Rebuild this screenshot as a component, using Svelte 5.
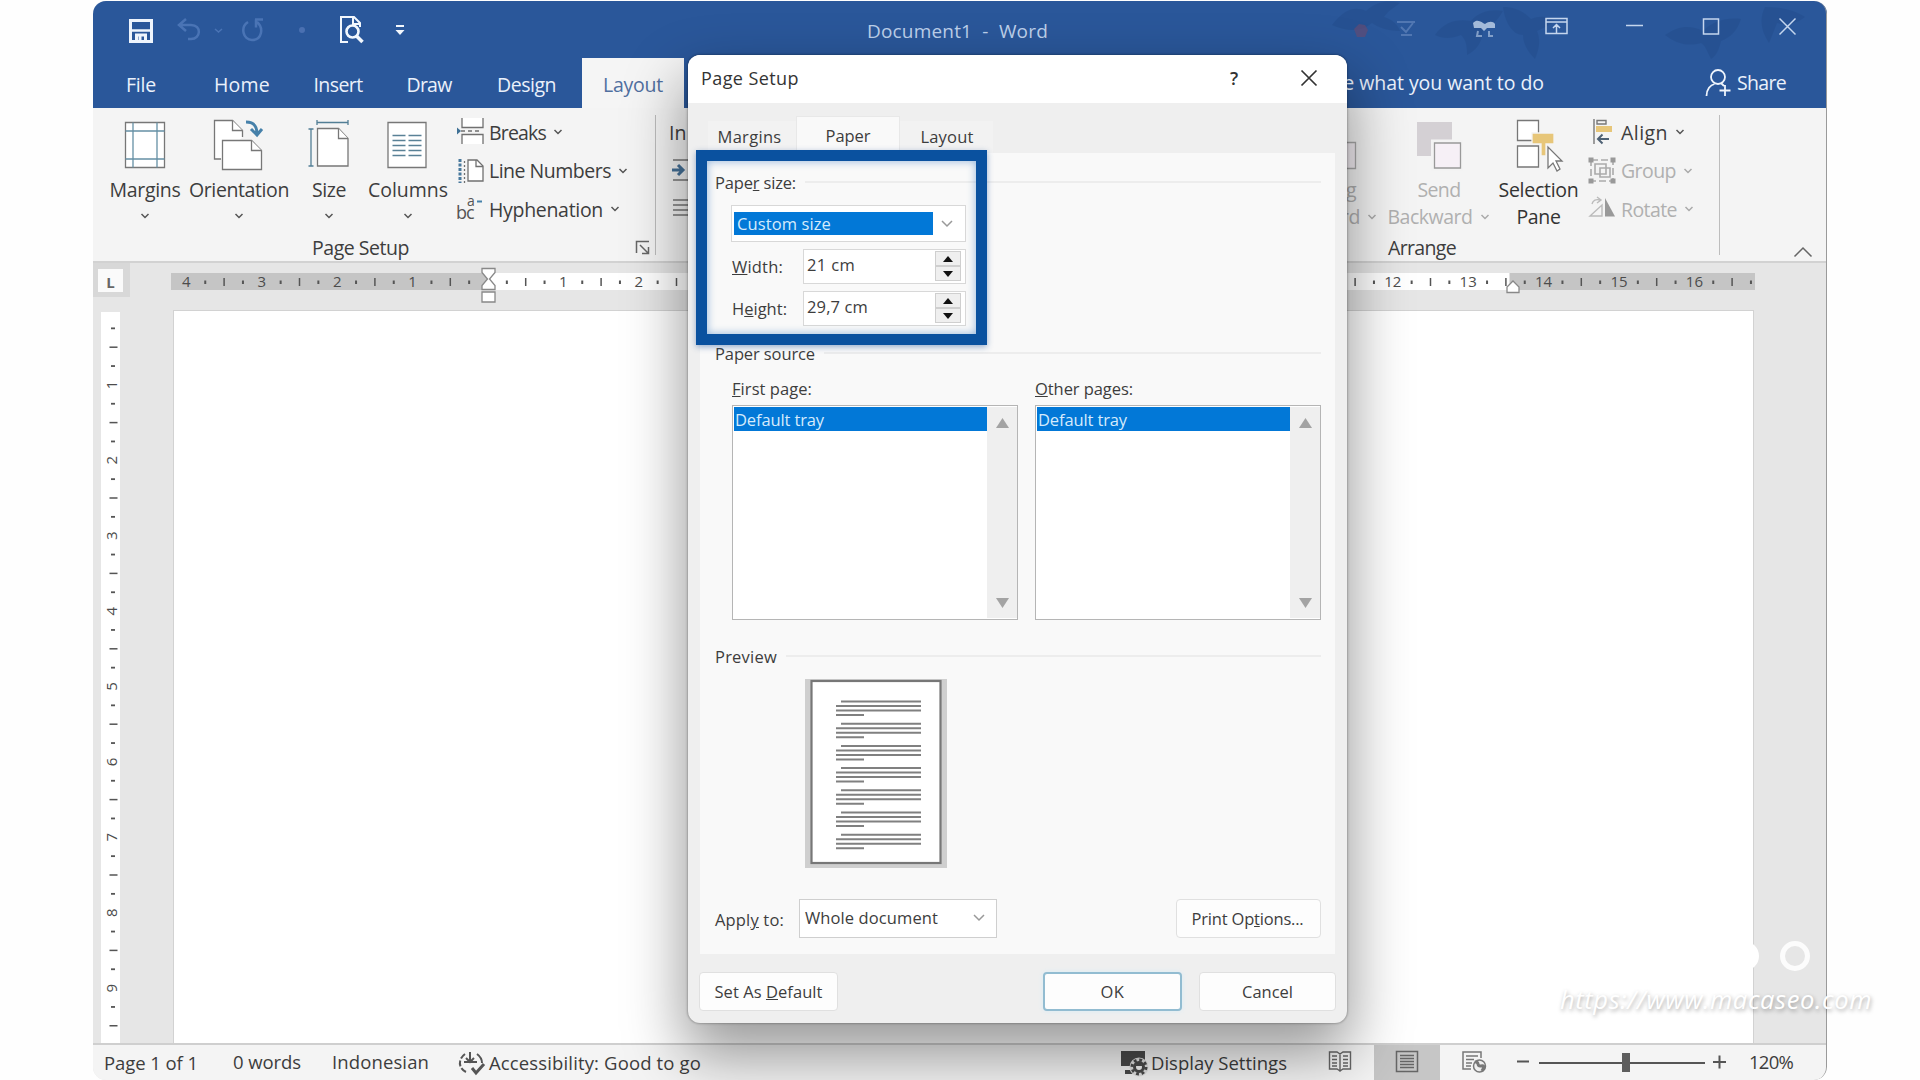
<script lang="ts">
  const UNIT = 75.4; // pixels per centimetre at 120% zoom

  const tabs = [
    { label: 'File', width: 30, box: 84 },
    { label: 'Home', width: 56, box: 118 },
    { label: 'Insert', width: 49, box: 74 },
    { label: 'Draw', width: 45, box: 108 },
    { label: 'Design', width: 59, box: 87 }
  ];

  const smallButtons = [
    { id: 'breaks', label: 'Breaks', width: 57 },
    { id: 'lines', label: 'Line Numbers', width: 122 },
    { id: 'hyphen', label: 'Hyphenation', width: 114 }
  ];

  // quarter-centimetre marks between two positions on a ruler
  function marks(from: number, to: number, origin: number) {
    const list = [];
    for (let q = from; q <= to; q++) {
      if (q === 0) continue;
      const kind = q % 4 === 0 ? 'num' : q % 2 === 0 ? 'line' : 'dot';
      list.push({ pos: origin + (q / 4) * UNIT, kind, n: Math.abs(q / 4) });
    }
    return list;
  }

  const hMarks = marks(-16, 67, 317);
  const vMarks = marks(1, 38, -2.5);
  const paragraphs = [0, 1, 2, 3, 4, 5, 6];

  // spreads the letters so that a label takes exactly the given width
  function fit(node: HTMLElement, width: number) {
    const natural = node.getBoundingClientRect().width;
    const count = node.textContent?.length ?? 1;
    node.style.letterSpacing = `${(width - natural) / count}px`;
    node.style.width = `${width}px`;
  }
</script>

{#snippet chevron(color = '#555')}
  <svg class="chevron" width="10" height="8" viewBox="0 0 10 8">
    <path d="M1.500 2l3.500 3.500L8.500 2" fill="none" stroke={color} stroke-width="1.500" />
  </svg>
{/snippet}

{#snippet spin()}
  <div class="spin">
    <div class="spin-btn"><svg width="10" height="6"><path d="M0 6L5 0l5 6z" fill="#111" /></svg></div>
    <div class="spin-btn"><svg width="10" height="6"><path d="M0 0h10L5 6z" fill="#111" /></svg></div>
  </div>
{/snippet}

{#snippet tray()}
  <div class="list">
    <div class="list-item"><span class="t" use:fit={89}>Default tray</span></div>
    <div class="scroll">
      <svg width="13" height="10"><path d="M0 10L6.500 0L13 10z" fill="#a3a3a3" /></svg>
      <svg width="13" height="10"><path d="M0 0h13L6.500 10z" fill="#a3a3a3" /></svg>
    </div>
  </div>
{/snippet}

<div class="screen">
  <div class="window">
    <header class="titlebar">
      <svg class="quick" width="330" height="34" viewBox="0 0 330 34" fill="none">
        <g stroke="#eef4fc" stroke-width="3">
          <path d="M7.500 6.500h21v21h-21z" />
          <path d="M9 16.500h18" stroke-width="2.500" />
          <path d="M13.500 27v-6h9v6M17 22v5" stroke-width="3" />
        </g>
        <g stroke="#4a74b5" stroke-width="2.500">
          <path d="M63 5l-7 6 7 6M57 11h11c11 0 10 14 0 14h-3" />
          <path d="M92 15l3.500 3 3.500-3" stroke-width="1.500" />
          <path d="M125 8c-8 5-5 18 4 18 10 0 12-12 5-18M132 5.500h8M133 5.500v8" />
        </g>
        <circle cx="179" cy="16" r="3" fill="#4a70b1" />
        <g stroke="#f2f7fd" stroke-width="2">
          <path d="M225 28h-7V3h13l6 6v4M230 3v7h7" />
          <circle cx="229.500" cy="17.500" r="6" stroke-width="2.600" />
          <path d="M233.500 22l6 6" stroke-width="3.500" />
        </g>
        <path d="M273 12h8" stroke="#f2f7fd" stroke-width="2" />
        <path d="M272.500 16h9l-4.500 5z" fill="#f2f7fd" />
      </svg>
      <span class="t doc-title" use:fit={181}>Document1&nbsp; -&nbsp; Word</span>
      <svg class="leaves" width="500" height="58" viewBox="0 0 500 58">
        <g fill="#1e4683" opacity=".3">
          <path d="M5 24c14-18 24-18 34-14 12-12 28-10 34-8-8 6-12 8-16 14 8 2 14 8 16 14-14 0-22-4-28-8-10 8-22 10-40 2z" />
          <path d="M108 34c10-14 22-16 36-14 8-10 22-12 32-10-6 10-10 14-20 18 0 14-8 22-16 26 0-12-2-16-6-20-10 4-18 4-26 0z" />
          <path d="M176 6c12 0 20 4 28 12 10-4 18-2 24 2-8 6-14 8-18 10 4 10 2 18-2 28-8-8-12-16-12-24-10 0-18-12-20-28z" />
          <path d="M338 34c14-10 26-10 38-4 10-10 24-14 38-12-4 12-10 18-20 22-2 8-4 14-10 18-4-8-6-14-10-16-14 4-26 0-36-8z" />
          <path d="M438 6c14 0 28 2 40 10-10 8-20 8-28 6l-8 20c-8-12-10-24-4-36z" />
        </g>
        <path d="M27 28l5-5 6 1 3 5-3 7h-8z" fill="#624b75" opacity=".7" />
        <path d="M70 21h18M74 26l5 5 7-9M74 34h11" stroke="#7898ca" stroke-width="2" fill="none" opacity=".5" />
        <path d="M146 22c5-5 9 0 12 1 4-3 8-3 10 0v4h-8l-3 3-3-3h-7z" fill="#c3d4eb" opacity=".8" />
        <path d="M151 30l-1 5h5M162 30v5h4" stroke="#a8bddd" stroke-width="2" fill="none" opacity=".7" />
      </svg>
      <svg class="win-controls" width="260" height="24" viewBox="0 0 260 24" fill="none" stroke="#c5d6ee" stroke-width="1.500">
        <path d="M2 3.500h21v15H2zM2 7h21M12.500 18v-8M9 13l3.500-3.500L16 13" />
        <path d="M82 10.500h17" />
        <path d="M159.500 4h15v15h-15z" />
        <path d="M235.500 3.500l16 16M251.500 3.500l-16 16" />
      </svg>
    </header>

    <nav class="tabs">
      {#each tabs as tab}
        <div class="tab" style="width: {tab.box}px"><span class="t" use:fit={tab.width}>{tab.label}</span></div>
      {/each}
      <div class="tab active"><span class="t" use:fit={60}>Layout</span></div>
      <span class="t tell" use:fit={255}>Tell me what you want to do</span>
      <svg class="share-icon" width="28" height="30" viewBox="0 0 28 30" fill="none" stroke="#eef4fc" stroke-width="1.800">
        <circle cx="13" cy="9" r="7" />
        <path d="M1.500 28c0-7 4-11 8-12M16 15l3 3M20 17v11M14.500 22.500h11" />
      </svg>
      <span class="t share" use:fit={49}>Share</span>
    </nav>

    <section class="ribbon">
      <div class="group setup">
        <div class="row">
          <div class="big" style="width: 80px">
            <svg width="52" height="54" viewBox="0 0 52 54" fill="#fff" stroke="#777" stroke-width="1.300">
              <path d="M6.500 4.500h39v45h-39z" />
              <path d="M14 4.500v45M38 4.500v45M6.500 13h39M6.500 41h39" stroke="#6590a5" fill="none" />
            </svg>
            <span class="t" use:fit={71}>Margins</span>
            {@render chevron()}
          </div>
          <div class="big" style="width: 108px">
            <svg width="52" height="54" viewBox="0 0 52 54" fill="#fff" stroke="#777" stroke-width="1.300">
              <path d="M8 41H1.500V2.500h18l10 10V19" />
              <path d="M19.500 2.500v10h10" />
              <path d="M9.500 22.500h29l10 10v19h-39z" />
              <path d="M38.500 22.500v10h10" />
              <path d="M33 4c7 0 11 3 11 12M38 11l6 6 5-6" fill="none" stroke="#4681aa" stroke-width="3" />
            </svg>
            <span class="t" use:fit={100}>Orientation</span>
            {@render chevron()}
          </div>
          <div class="big" style="width: 72px">
            <svg width="52" height="54" viewBox="0 0 52 54" fill="#fff" stroke="#777" stroke-width="1.300">
              <path d="M14.500 10.500h21l9.500 10v27.500H14.500z" />
              <path d="M35.500 10.500v10H45" />
              <path d="M14 4.500h31M14 2v5M45 2v5M8 11v37M5.500 11h5M5.500 48h5" fill="none" stroke="#527e95" />
            </svg>
            <span class="t" use:fit={34}>Size</span>
            {@render chevron()}
          </div>
          <div class="big" style="width: 86px">
            <svg width="52" height="54" viewBox="0 0 52 54" fill="#fff" stroke="#777" stroke-width="1.300">
              <path d="M6 4.500h38v45H6z" />
              <path d="M10.500 17.500h13M26.500 17.500h13M10.500 22.500h13M26.500 22.500h13M10.500 27.500h13M26.500 27.500h13M10.500 32.500h13M26.500 32.500h13M10.500 37.500h13M26.500 37.500h13" stroke="#598196" stroke-width="1.500" />
            </svg>
            <span class="t" use:fit={80}>Columns</span>
            {@render chevron()}
          </div>
          <div class="small-col">
            {#each smallButtons as button}
              <div class="small">
                <svg width="30" height="28" viewBox="0 0 30 28" fill="none" stroke="#707070" stroke-width="1.300">
                  {#if button.id === 'breaks'}
                    <path d="M6 0v9.500h21V0M6 26v-9.500h21V26" fill="#fff" />
                    <path d="M1 9.500v7l4-3.500z" fill="#3e7095" stroke="none" />
                    <path d="M5 13h4m3 0h4m3 0h4" />
                  {:else if button.id === 'lines'}
                    <path d="M12 3h9l6 6v15H12z" fill="#fff" />
                    <path d="M20 3v6.500h7" />
                    <path d="M4 2v24" stroke="#49799d" stroke-width="3" stroke-dasharray="3 1.500" />
                    <path d="M8.500 4v22" stroke-dasharray="2 2" />
                  {:else}
                    <text class="hy" x="0" y="24" stroke="none" fill="#555">bc<tspan class="hy-a" x="11" y="11">a</tspan></text>
                    <path d="M21 6.500h5" stroke="#4681aa" stroke-width="2" />
                  {/if}
                </svg>
                <span class="t" use:fit={button.width}>{button.label}</span>
                {@render chevron()}
              </div>
            {/each}
          </div>
        </div>
        <div class="group-foot">
          <span class="t" use:fit={97}>Page Setup</span>
          <svg class="launcher" width="16" height="16" viewBox="0 0 16 16" fill="none" stroke="#666" stroke-width="1.500">
            <path d="M1.500 13V1.500H14M5 5l8 8M13.500 7v6.500H7" />
          </svg>
        </div>
      </div>
      <div class="group indent">
        <span class="t">In</span>
        <svg width="24" height="60" viewBox="0 0 24 60" fill="none" stroke="#777" stroke-width="1.500">
          <path d="M4 2h20M4 22h20" />
          <path d="M3 12h11M9 7l5 5-5 5" stroke="#467299" stroke-width="3" />
          <path d="M4 42h20M4 47h20M4 52h20M4 57h20" />
        </svg>
      </div>

      <div class="group arrange">
        <div class="row">
          <div class="big faded forward">
            <svg width="52" height="54" viewBox="0 0 52 54">
              <path d="M17.500 24.500h27v26h-27z" fill="#f5f0f5" stroke="#aaa" stroke-width="1.300" />
            </svg>
            <span class="t" use:fit={43}>Bring</span>
            <div class="second"><span class="t" use:fit={72}>Forward</span>{@render chevron('#aaa')}</div>
          </div>
          <div class="big faded send">
            <svg width="52" height="54" viewBox="0 0 52 54">
              <path d="M4 4h35v34H4z" fill="#d4d0d4" />
              <path d="M20.500 24h27v27h-27z" fill="#f6f0f6" stroke="#f3f3f3" stroke-width="5" />
              <path d="M21.500 25h26v25h-26z" fill="#f6f0f6" stroke="#999" stroke-width="1.300" />
            </svg>
            <span class="t" use:fit={43}>Send</span>
            <div class="second"><span class="t" use:fit={85}>Backward</span>{@render chevron('#aaa')}</div>
          </div>
          <div class="big selection">
            <svg width="52" height="54" viewBox="0 0 52 54" fill="#fff" stroke="#777" stroke-width="1.300">
              <path d="M4.500 2.500h21v20h-21zM4.500 28h21v21h-21z" />
              <path d="M19 15h22v11h-8v12h-5V26h-9z" fill="#e7c679" stroke="#f4f4f4" />
              <path d="M35 29v21l5-5 4 8 3-2-4-8h6z" />
            </svg>
            <span class="t" use:fit={80}>Selection</span>
            <div class="second"><span class="t" use:fit={44}>Pane</span></div>
          </div>
          <div class="small-col">
            <div class="small">
              <svg width="30" height="28" viewBox="0 0 30 28" fill="none" stroke="#777" stroke-width="1.400">
                <path d="M7 1v25M10 2.500h9v3.500h-9z" />
                <path d="M9 8h16v6H9z" fill="#e7c679" stroke="none" />
                <path d="M22 21H11M15.500 16.500L11 21l4.500 4.500" stroke="#4e6174" stroke-width="2" />
              </svg>
              <span class="t" use:fit={47}>Align</span>
              {@render chevron()}
            </div>
            <div class="small faded">
              <svg width="30" height="28" viewBox="0 0 30 28" fill="none" stroke="#aaa" stroke-width="1.600">
                <path d="M4 3h22v21H4z" stroke-dasharray="7 3" />
                <path d="M8 7h11v10H8zM13 11h10v9H13z" />
                <path d="M1.500 .5h5v5h-5zM23.500 .5h5v5h-5zM1.500 21.500h5v5h-5zM23.500 21.500h5v5h-5z" fill="#999" stroke="none" />
              </svg>
              <span class="t" use:fit={55}>Group</span>
              {@render chevron('#aaa')}
            </div>
            <div class="small faded">
              <svg width="30" height="28" viewBox="0 0 30 28" fill="none" stroke="#bbb" stroke-width="1.400">
                <path d="M15 10v11H3z" />
                <path d="M18 3v18.500h10z" fill="#999" stroke="none" />
                <path d="M5 9c1-4 4-5 8-4M10 2l4 3-4 3" />
              </svg>
              <span class="t" use:fit={56}>Rotate</span>
              {@render chevron('#aaa')}
            </div>
          </div>
        </div>
        <div class="group-foot"><span class="t" use:fit={68}>Arrange</span></div>
      </div>
      <svg class="collapse" width="20" height="12" viewBox="0 0 20 12">
        <path d="M1.500 10.500L10 2l8.500 8.500" fill="none" stroke="#666" stroke-width="1.500" />
      </svg>
    </section>

    <div class="ruler-row">
      <div class="tab-stop"><div>L</div></div>
      <svg class="h-ruler" width="1584" height="40" viewBox="0 0 1584 40">
        <rect y="10" width="1584" height="17" fill="#c5c5c5" />
        <rect x="317.500" y="10" width="1021" height="17" fill="#fff" />
        {#each hMarks as m}
          {#if m.kind === 'num'}
            <text x={m.pos} y="24" text-anchor="middle">{m.n}</text>
          {:else if m.kind === 'line'}
            <path d="M{m.pos} 15v8" stroke="#555" stroke-width="1.500" />
          {:else}
            <path d="M{m.pos} 17.500v3.500" stroke="#555" stroke-width="2" />
          {/if}
        {/each}
        <g fill="#fff" stroke="#888" stroke-width="1.300">
          <path d="M311 5.500h13v4L318.500 16l5.500 6.500v4h-13v-4l5.500-6.500L311 9.500z" />
          <path d="M311 29h13v10h-13z" />
          <path d="M1336 29.500v-5.500l6-6 6 6v5.500z" />
        </g>
      </svg>
    </div>

    <main class="canvas">
      <svg class="v-ruler" width="19" height="731" viewBox="0 0 19 731">
        {#each vMarks as m}
          {#if m.kind === 'num'}
            <text transform="translate(16 {m.pos}) rotate(-90)" text-anchor="middle">{m.n}</text>
          {:else if m.kind === 'line'}
            <path d="M8.500 {m.pos}h8" stroke="#555" stroke-width="1.500" />
          {:else}
            <path d="M10 {m.pos}h4" stroke="#555" stroke-width="1.800" />
          {/if}
        {/each}
      </svg>
      <div class="page"></div>
    </main>

    <footer class="status">
      <span class="t pages" use:fit={94}>Page 1 of 1</span>
      <span class="t words" use:fit={68}>0 words</span>
      <span class="t lang" use:fit={97}>Indonesian</span>
      <svg class="access" width="28" height="26" viewBox="0 0 28 26" fill="none" stroke="#555" stroke-width="2">
        <path d="M7 4C0 9 0 18 8 22" stroke-dasharray="6 2" />
        <path d="M12 2v9M8 8l4 4 4-4M19 4c4 3 5 6 5 9M6 12h13" />
        <path d="M14 18l4 5 8-9" stroke-width="3" />
      </svg>
      <span class="t" use:fit={212}>Accessibility: Good to go</span>
      <svg class="display-icon" width="28" height="26" viewBox="0 0 28 26">
        <path d="M1 1h24v15H1zM5 20h9v4H5z" fill="#4a4a4a" />
        <circle cx="19" cy="17" r="6.500" fill="none" stroke="#e0e0e0" stroke-width="6" />
        <circle cx="19" cy="17" r="4.500" fill="none" stroke="#4a4a4a" stroke-width="3" />
        <circle cx="19" cy="17" r="7" fill="none" stroke="#4a4a4a" stroke-width="3" stroke-dasharray="2.800 2.700" />
      </svg>
      <span class="t" use:fit={136}>Display Settings</span>
      <svg class="read-icon" width="24" height="24" viewBox="0 0 24 24" fill="none" stroke="#666" stroke-width="1.400">
        <path d="M1.500 2H9l3 2 3-2h7.500v17H15l-3 2-3-2H1.500zM12 4v18M4 6h5M4 9.500h5M4 13h5M4 16h5M15 6h5M15 9.500h5M15 13h5M15 16h5" />
      </svg>
      <div class="view-on">
        <svg width="24" height="24" viewBox="0 0 24 24" fill="none" stroke="#666" stroke-width="1.500">
          <path d="M1.500 1.500h21v20h-21zM5 5.500h14M5 8.500h14M5 11.500h14M5 14.500h14M5 17.500h14" />
        </svg>
      </div>
      <svg class="web-icon" width="26" height="24" viewBox="0 0 26 24" fill="none" stroke="#777" stroke-width="1.500">
        <path d="M10 19H2V2h18v6M5 6h12M5 9.500h8M5 13h6M5 16h5" />
        <circle cx="18.500" cy="16" r="6" fill="#eee" />
        <path d="M14 12c5-1 1 5 6 4s2 3 1 5" stroke-width="3" />
      </svg>
      <svg class="zoom-bar" width="214" height="24" viewBox="0 0 214 24" fill="none" stroke="#555" stroke-width="2">
        <path d="M2 10.500h12M24 12h166M198 11h13M204.500 4.500v13" />
        <path d="M107 2h8v19h-8z" fill="#5e5e5e" stroke="none" />
      </svg>
      <span class="t percent" use:fit={44}>120%</span>
    </footer>

    <div class="dialog">
      <div class="dialog-title">
        <span class="t" use:fit={98}>Page Setup</span>
        <span class="help">?</span>
        <svg width="20" height="20" viewBox="0 0 20 20"><path d="M2.500 2.500l15 15M17.500 2.500l-15 15" stroke="#333" stroke-width="1.700" /></svg>
      </div>
      <div class="dialog-tabs">
        <div class="dtab first"><span class="t" use:fit={64}>Margins</span></div>
        <div class="dtab on"><span class="t" use:fit={45}>Paper</span></div>
        <div class="dtab last"><span class="t" use:fit={53}>Layout</span></div>
      </div>

      <div class="panel">
        <div class="head size-head"><span class="t" use:fit={81}>Pape<u>r</u> size:</span><i></i></div>
        <div class="combo">
          <div class="picked"><span class="t" use:fit={94}>Custom size</span></div>
          <svg width="14" height="10" viewBox="0 0 14 10"><path d="M2 2l5 5 5-5" fill="none" stroke="#999" stroke-width="1.500" /></svg>
        </div>
        <div class="measure">
          <label for="width"><span class="t" use:fit={51}><u>W</u>idth:</span></label>
          <div class="field" id="width"><span class="t" use:fit={48}>21 cm</span>{@render spin()}</div>
        </div>
        <div class="measure tall">
          <label for="height"><span class="t" use:fit={55}>H<u>e</u>ight:</span></label>
          <div class="field" id="height"><span class="t" use:fit={61}>29,7 cm</span>{@render spin()}</div>
        </div>

        <div class="head source-head"><span class="t" use:fit={100}>Paper source</span><i></i></div>
        <div class="trays">
          <div>
            <div class="tray-label"><span class="t" use:fit={80}><u>F</u>irst page:</span></div>
            {@render tray()}
          </div>
          <div>
            <div class="tray-label"><span class="t" use:fit={98}><u>O</u>ther pages:</span></div>
            {@render tray()}
          </div>
        </div>

        <div class="head preview-head"><span class="t" use:fit={62}>Preview</span><i></i></div>
        <svg class="preview" width="142" height="189" viewBox="0 0 142 189">
          <rect width="142" height="189" fill="#cfcfcf" />
          <rect x="6.500" y="2" width="129" height="182" fill="#fff" stroke="#777" stroke-width="2.200" />
          {#each paragraphs as p}
            <g transform="translate(0 {1.5 + p * 22.2})" stroke="#808080" stroke-width="2">
              <path d="M36 21h80M31 25.500h85M31 30h85M31 34.500h28" />
            </g>
          {/each}
        </svg>
        <div class="apply">
          <span class="t" use:fit={69}>Appl<u>y</u> to:</span>
          <div class="apply-combo">
            <span class="t" use:fit={133}>Whole document</span>
            <svg width="14" height="10" viewBox="0 0 14 10"><path d="M2 2l5 5 5-5" fill="none" stroke="#999" stroke-width="1.500" /></svg>
          </div>
          <div class="btn print"><span class="t" use:fit={112}>Print Op<u>t</u>ions...</span></div>
        </div>
      </div>

      <div class="dialog-foot">
        <div class="btn default"><span class="t" use:fit={108}>Set As <u>D</u>efault</span></div>
        <div class="btn ok"><span class="t" use:fit={24}>OK</span></div>
        <div class="btn"><span class="t" use:fit={51}>Cancel</span></div>
      </div>

      <div class="highlight"></div>
    </div>
  </div>

  <div class="rings"><span class="full"></span><span></span></div>
  <div class="watermark"><span class="t" use:fit={312}>https://www.macaseo.com</span></div>
</div>

<style>
  :global(body) {
    margin: 0;
    background: #fff;
  }

  .screen {
    position: relative;
    width: 1920px;
    height: 1080px;
    overflow: hidden;
    background: #fefefe;
    font-family: "Open Sans", "Noto Sans", sans-serif;
    font-size: 19.5px;
    color: #3d3d3d;
  }

  .screen svg {
    display: block;
    flex-shrink: 0;
    overflow: visible;
  }

  .t {
    display: inline-block;
    white-space: nowrap;
    flex-shrink: 0;
  }

  .window {
    position: relative;
    display: flex;
    flex-direction: column;
    box-sizing: border-box;
    width: 1734px;
    height: 1079px;
    margin: 1px 0 0 93px;
    border-radius: 13px;
    overflow: hidden;
    background: #e6e6e6;
  }

  .window::after {
    content: "";
    position: absolute;
    inset: 0;
    border-right: 1.5px solid #9a9a9a;
    border-radius: 13px;
    pointer-events: none;
  }

  .titlebar {
    position: relative;
    display: flex;
    align-items: center;
    height: 57px;
    background: #2a579a;
  }

  .quick {
    margin: 2px 0 0 30px;
  }

  .doc-title {
    margin-left: 414px;
    margin-top: 3px;
    color: #bdd0ea;
    font-size: 19px;
  }

  .leaves {
    position: absolute;
    right: 0;
    top: 0;
  }

  .win-controls {
    margin-left: 496px;
    margin-bottom: 5px;
    z-index: 1;
  }

  .tabs {
    display: flex;
    align-items: center;
    height: 50px;
    padding-left: 6px;
    background: #2a579a;
    color: #eaf1fb;
  }

  .tab {
    display: flex;
    align-items: center;
    justify-content: center;
    box-sizing: border-box;
    height: 50px;
    padding-top: 2px;
  }

  .tab.active {
    width: 102px;
    margin-left: 12px;
    background: #f5f5f5;
    color: #506f9f;
  }

  .tell {
    margin-left: 605px;
    margin-bottom: 1px;
  }

  .share-icon {
    margin-left: 161px;
  }

  .share {
    margin-left: 4px;
    margin-bottom: 1px;
  }

  .ribbon {
    display: flex;
    box-sizing: border-box;
    height: 155px;
    border-bottom: 2px solid #d2d2d2;
    background: #f4f4f4;
  }

  .group {
    display: flex;
    flex-direction: column;
    flex-shrink: 0;
    box-sizing: border-box;
  }

  .setup {
    width: 563px;
    padding-left: 12px;
    position: relative;
  }

  .setup::after,
  .arrange::after {
    content: "";
    position: absolute;
    right: 0;
    top: 7px;
    height: 140px;
    border-right: 1.5px solid #bdbdbd;
  }

  .row {
    display: flex;
    height: 126px;
  }

  .big {
    display: flex;
    flex-direction: column;
    align-items: center;
    padding-top: 10px;
    flex-shrink: 0;
  }

  .big .t {
    line-height: 28px;
    margin-top: 4px;
  }

  .big > .chevron {
    margin-top: 8px;
  }

  .second {
    display: flex;
    align-items: center;
    position: relative;
  }

  .second .t {
    margin-top: 0;
    line-height: 25px;
  }

  .second .chevron {
    position: absolute;
    left: 100%;
    margin-left: 7px;
  }

  .faded {
    color: #b0b0b0;
  }

  .small-col {
    padding: 5px 0 0 5px;
  }

  .small {
    display: flex;
    align-items: center;
    height: 38.5px;
  }

  .small .t {
    margin-left: 3px;
  }

  .small .chevron {
    margin-left: 7px;
  }

  .hy {
    font-size: 18px;
    letter-spacing: -1px;
  }

  .hy-a {
    font-size: 14px;
  }

  .group-foot {
    display: flex;
    align-items: center;
    height: 27px;
  }

  .setup .group-foot {
    padding-left: 207px;
  }

  .launcher {
    margin-left: 226px;
  }

  .indent {
    width: 90px;
    padding: 11px 0 0 13px;
    line-height: 28px;
  }

  .indent svg {
    margin-top: 11px;
  }

  .arrange {
    width: 433px;
    margin-left: 541px;
    position: relative;
  }

  .arrange .group-foot {
    padding-left: 101px;
  }

  .forward {
    width: 84px;
    margin-left: -5px;
  }

  .forward > svg {
    margin-left: 26px;
  }

  .forward > .t {
    margin-left: 20px;
  }

  .send {
    width: 104px;
    margin-left: 12px;
  }

  .send > svg,
  .send > .t {
    margin-left: 18px;
  }

  .selection {
    width: 113px;
    color: #333;
  }

  .arrange .small-col {
    margin-left: -8px;
    padding-left: 0;
  }

  .arrange .small .t {
    margin-left: 4px;
  }

  .collapse {
    margin: 138px 0 0 73px;
  }

  .ruler-row {
    display: flex;
    height: 47px;
    flex-shrink: 0;
  }

  .tab-stop {
    box-sizing: border-box;
    width: 37px;
    height: 34px;
    padding: 6px 7px 5px 5px;
    background: #d8d8d8;
  }

  .tab-stop div {
    height: 23px;
    background: #fafafa;
    color: #666;
    text-align: center;
    font-size: 15px;
    font-weight: 700;
    line-height: 26px;
  }

  .h-ruler {
    margin-left: 41px;
  }

  .h-ruler text,
  .v-ruler text {
    font-size: 15px;
    fill: #4c4c4c;
  }

  .canvas {
    display: flex;
    height: 733px;
    flex-shrink: 0;
  }

  .v-ruler {
    margin: 2px 0 0 8px;
    background: #fff;
  }

  .page {
    width: 1579px;
    margin-left: 53px;
    border: solid #d2d2d2;
    border-width: 1px 1px 0;
    background: #fff;
  }

  .status {
    display: flex;
    align-items: center;
    box-sizing: border-box;
    height: 37px;
    border-top: 2px solid #cfcfcf;
    background: #f4f4f4;
    font-size: 18.5px;
  }

  .pages {
    margin: 0 0 0 11px;
  }

  .words {
    margin: -2px 0 0 35px;
  }

  .lang {
    margin: -2px 0 0 31px;
  }

  .access {
    margin: 0 3px 0 29px;
  }

  .display-icon {
    margin: 0 3px 0 419px;
  }

  .read-icon {
    margin: 0 0 2px 41px;
  }

  .view-on {
    display: flex;
    align-items: center;
    justify-content: center;
    box-sizing: border-box;
    width: 66px;
    height: 35px;
    margin-left: 22px;
    padding-bottom: 2px;
    background: #c6c6c6;
  }

  .web-icon {
    margin: 0 0 2px 21px;
  }

  .zoom-bar {
    margin-left: 28px;
  }

  .percent {
    margin: -2px 0 0 20px;
  }

  .dialog {
    position: absolute;
    left: 595px;
    top: 54px;
    width: 659px;
    height: 968px;
    border-radius: 12px;
    background: #efefef;
    box-shadow: 0 0 2px 1px rgba(0, 0, 0, 0.22), 0 28px 60px 4px rgba(0, 0, 0, 0.4);
    font-size: 16.5px;
  }

  .dialog-title {
    display: flex;
    align-items: center;
    box-sizing: border-box;
    height: 48px;
    padding: 0 0 2px 13px;
    border-radius: 12px 12px 0 0;
    background: #fff;
    font-size: 18px;
    color: #333;
  }

  .help {
    width: 20px;
    margin-left: 425px;
    text-align: center;
    font-size: 18px;
    font-weight: 600;
  }

  .dialog-title svg {
    margin-left: 55px;
  }

  .dialog-tabs {
    display: flex;
    align-items: flex-end;
    height: 50px;
    padding-left: 20px;
  }

  .dtab {
    display: flex;
    align-items: center;
    justify-content: center;
    box-sizing: border-box;
    height: 32px;
    padding-bottom: 1px;
    background: #f2f2f2;
  }

  .dtab.first {
    width: 88px;
    padding-right: 5px;
  }

  .dtab.on {
    width: 104px;
    height: 37px;
    padding-top: 2px;
    border: 1px solid #e8e8e8;
    border-bottom: 0;
    background: #f9f9f9;
  }

  .dtab.last {
    width: 93px;
    padding-left: 1px;
  }

  .panel {
    box-sizing: border-box;
    height: 801px;
    margin: 0 12px;
    padding: 14px 14px 0 15px;
    background: #f9f9f9;
  }

  .head {
    display: flex;
    align-items: center;
    height: 30px;
  }

  .head i {
    flex: 1;
    height: 2px;
    margin: 0 0 1px 9px;
    background: #ededed;
  }

  .combo {
    display: flex;
    align-items: center;
    box-sizing: border-box;
    width: 235px;
    height: 37px;
    margin: 8px 0 0 16px;
    padding-left: 2px;
    border: 1.5px solid #d8d8d8;
    background: #fff;
  }

  .picked {
    width: 199px;
    height: 23px;
    padding-left: 3px;
    box-sizing: border-box;
    background: #0278d7;
    color: #d5ebfc;
    line-height: 24px;
  }

  .combo svg {
    margin-left: 7px;
  }

  .measure {
    display: flex;
    margin: 7px 0 0 17px;
  }

  .measure.tall {
    margin-top: 6px;
  }

  .measure label {
    width: 71px;
    line-height: 36px;
  }

  .field {
    display: flex;
    justify-content: space-between;
    box-sizing: border-box;
    width: 163px;
    height: 35px;
    padding: 1px 4px 0 3px;
    border: 1.5px solid #d8d8d8;
    background: #fff;
    line-height: 28px;
  }

  .spin-btn {
    display: flex;
    align-items: center;
    justify-content: center;
    box-sizing: border-box;
    width: 26px;
    height: 15px;
    border: 1px solid #cfcfcf;
    background: #efefef;
  }

  .source-head {
    margin-top: 11px;
  }

  .trays {
    display: flex;
    gap: 17px;
    margin: 6px 0 0 17px;
  }

  .tray-label {
    height: 28px;
    line-height: 29px;
  }

  .list {
    display: flex;
    justify-content: space-between;
    box-sizing: border-box;
    width: 286px;
    height: 215px;
    margin-top: 3px;
    padding: 1px 0 1px 1px;
    border: 1.5px solid #b5b5b5;
    background: #fff;
  }

  .list-item {
    width: 253px;
    height: 24px;
    padding-left: 1px;
    box-sizing: border-box;
    background: #0278d7;
    color: #d5ebfc;
    line-height: 25px;
  }

  .scroll {
    display: flex;
    flex-direction: column;
    justify-content: space-between;
    align-items: center;
    box-sizing: border-box;
    width: 30px;
    padding: 11px 0 10px;
    background: #efefef;
  }

  .preview-head {
    margin-top: 21px;
  }

  .preview {
    margin: 8px 0 0 90px;
  }

  .apply {
    display: flex;
    align-items: center;
    height: 39px;
    margin-top: 31px;
  }

  .apply > .t {
    margin-top: 2px;
  }

  .apply-combo {
    display: flex;
    align-items: center;
    justify-content: space-between;
    box-sizing: border-box;
    width: 198px;
    height: 39px;
    margin-left: 15px;
    padding: 0 10px 2px 5px;
    border: 1.5px solid #cfcfcf;
    background: #fff;
  }

  .btn {
    display: flex;
    align-items: center;
    justify-content: center;
    box-sizing: border-box;
    width: 137px;
    height: 39px;
    border: 1.5px solid #e0e0e0;
    border-radius: 4px;
    background: #fdfdfd;
  }

  .print {
    width: 145px;
    margin-left: auto;
    padding: 0 2px 1px 0;
  }

  .dialog-foot {
    display: flex;
    padding: 18px 11px;
  }

  .default {
    width: 139px;
  }

  .ok {
    width: 139px;
    margin: 0 17px 0 auto;
    border: 2px solid #92bcd1;
    box-shadow: 0 0 5px #d8ebf5;
  }

  .highlight {
    position: absolute;
    left: 8px;
    top: 95px;
    box-sizing: border-box;
    width: 291px;
    height: 195px;
    border: 11px solid #0a519f;
    box-shadow: 0 2px 6px rgba(30, 80, 150, 0.45), inset 0 0 8px rgba(40, 110, 190, 0.5);
  }

  .rings {
    position: absolute;
    left: 1729px;
    top: 941px;
    display: flex;
    gap: 21px;
  }

  .rings span {
    box-sizing: border-box;
    width: 30px;
    height: 30px;
    border: 5.5px solid #fcfcfc;
    border-radius: 50%;
  }

  .rings .full {
    border-color: #fff;
    background: #fff;
  }

  .watermark {
    position: absolute;
    left: 1560px;
    top: 982px;
    color: #fff;
    font-size: 25.5px;
    font-style: italic;
    font-weight: 400;
    line-height: 34px;
    text-shadow: 1px 2px 4px rgba(0, 0, 0, 0.35);
  }
</style>
